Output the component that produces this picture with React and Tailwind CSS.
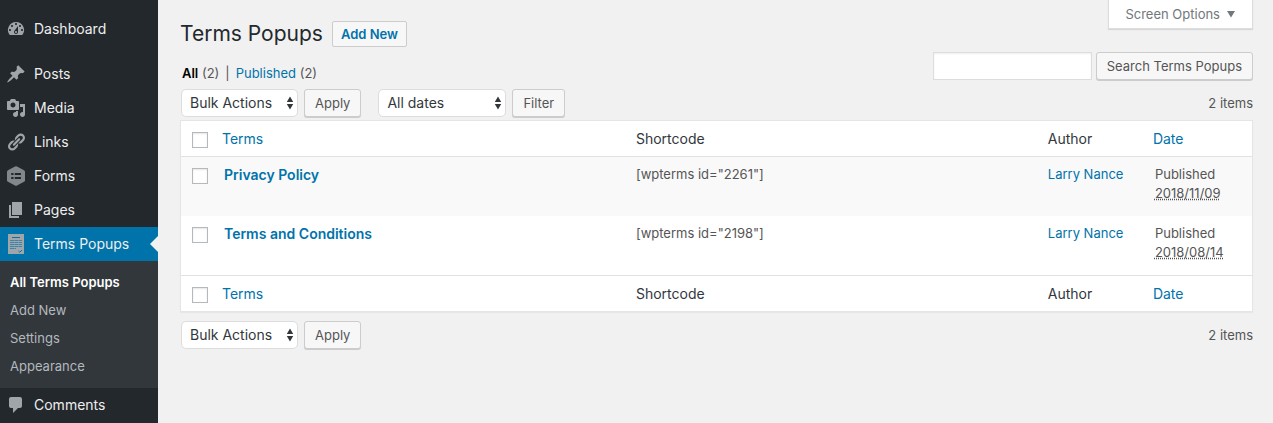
import React, { useState } from "react";

const ICONS = {
  dashboard:
    "M3.76 16h12.48A7.998 7.998 0 0 0 10 3a7.998 7.998 0 0 0-6.24 13zM10 4c.55 0 1 .45 1 1s-.45 1-1 1-1-.45-1-1 .45-1 1-1zM6 6c.55 0 1 .45 1 1s-.45 1-1 1-1-.45-1-1 .45-1 1-1zm8 0c.55 0 1 .45 1 1s-.45 1-1 1-1-.45-1-1 .45-1 1-1zm-5.37 5.55L12 7v6c0 1.1-.9 2-2 2s-2-.9-2-2c0-.57.24-1.08.63-1.45zM4 10c.55 0 1 .45 1 1s-.45 1-1 1-1-.45-1-1 .45-1 1-1zm12 0c.55 0 1 .45 1 1s-.45 1-1 1-1-.45-1-1 .45-1 1-1zm-5 3c0-.55-.45-1-1-1s-1 .45-1 1 .45 1 1 1 1-.45 1-1z",
  posts:
    "M10.44 3.02l1.82-1.82 6.36 6.35-1.83 1.82c-1.05-.68-2.48-.57-3.41.36l-.75.75c-.92.93-1.04 2.35-.35 3.41l-1.83 1.82-2.41-2.41-2.8 2.79c-.42.42-3.38 2.71-3.8 2.29s1.86-3.39 2.28-3.81l2.79-2.79L4.1 9.36l1.83-1.82c1.05.69 2.48.57 3.4-.36l.75-.75c.93-.92 1.05-2.35.36-3.41z",
  media:
    "M13 11V4c0-.55-.45-1-1-1h-1.67L9 1H5L3.67 3H2c-.55 0-1 .45-1 1v7c0 .55.45 1 1 1h10c.55 0 1-.45 1-1zM7 4.5c1.38 0 2.5 1.12 2.5 2.5S8.38 9.5 7 9.5 4.5 8.38 4.5 7 5.62 4.5 7 4.5zM14 6h5v10.5c0 1.38-1.12 2.5-2.5 2.5S14 17.88 14 16.5s1.12-2.5 2.5-2.5c.17 0 .34.02.5.05V9h-3V6zm-4 8.05V13h2v3.5c0 1.38-1.12 2.5-2.5 2.5S7 17.88 7 16.5 8.12 14 9.5 14c.17 0 .34.02.5.05z",
  links:
    "M17.74 2.76c1.68 1.69 1.68 4.41 0 6.1l-1.53 1.52c-1.12 1.12-2.7 1.47-4.14 1.09l2.62-2.61.76-.77.76-.76c.84-.84.84-2.2 0-3.04-.84-.85-2.2-.85-3.04 0l-.77.76-3.38 3.38c-.37-1.44-.02-3.02 1.1-4.14l1.52-1.53c1.69-1.68 4.42-1.68 6.1 0zM8.59 13.43l5.34-5.34c.42-.42.42-1.1 0-1.52-.44-.43-1.13-.39-1.53 0l-5.33 5.34c-.42.42-.42 1.1 0 1.52.44.43 1.13.39 1.52 0zm-.76 2.29l4.14-4.15c.38 1.44.03 3.02-1.09 4.14l-1.52 1.53c-1.69 1.68-4.41 1.68-6.1 0-1.68-1.68-1.68-4.42 0-6.1l1.53-1.52c1.12-1.12 2.7-1.47 4.14-1.1l-4.14 4.15c-.85.84-.85 2.2 0 3.05.84.84 2.2.84 3.04 0z",
  pages: "M6 15V2h10v13H6zm-1 1h8v2H3V5h2v11z",
  comments:
    "M5 2h9c1.1 0 2 .9 2 2v7c0 1.1-.9 2-2 2h-2l-5 5v-5H5c-1.1 0-2-.9-2-2V4c0-1.1.9-2 2-2z",
};

const FormsIcon = () => (
  <svg viewBox="0 0 20 20" className="w-5 h-5" aria-hidden="true">
    <path
      d="M11 .5l7 3.700q1 .6 1 1.600v8.400q0 1-1 1.600l-7 3.700q-1 .5-2 0l-7-3.700q-1-.6-1-1.600V5.800q0-1 1-1.600L9 .5q1-.5 2 0z"
      fill="#82878c"
    />
    <path
      d="M5.200 7h2.300v2H5.200zM8.700 7h6.300v2H8.700zM5.200 11h2.300v2H5.200zM8.700 11h6.300v2H8.700z"
      fill="#23282d"
    />
  </svg>
);

const TermsIcon = () => (
  <svg viewBox="0 0 20 20" className="w-5 h-5" aria-hidden="true">
    <path d="M2 0h16v20H2z" fill="#a0a5aa" />
    <path d="M6 3.500h8" stroke="#0073aa" />
    <path
      d="M4 6.500h12M4 8.500h12M4 10.500h12M4 12.500h12M4 14.500h6"
      stroke="#0073aa"
      strokeWidth="0.8"
      strokeDasharray="4 0.4"
      opacity="0.8"
    />
    <path d="M12.500 17l1.300 1.200L16 16" stroke="#0073aa" fill="none" />
  </svg>
);

const MenuIcon = ({ name }) => {
  if (name === "forms") return <FormsIcon />;
  if (name === "terms") return <TermsIcon />;
  return (
    <svg viewBox="0 0 20 20" className="w-5 h-5" fill="#a0a5aa" aria-hidden="true">
      <path d={ICONS[name]} />
    </svg>
  );
};

const menu = [
  { icon: "posts", label: "Posts" },
  { icon: "media", label: "Media" },
  { icon: "links", label: "Links" },
  { icon: "forms", label: "Forms" },
  { icon: "pages", label: "Pages" },
];

const submenu = ["Add New", "Settings", "Appearance"];

const posts = [
  { id: 2261, title: "Privacy Policy", author: "Larry Nance", date: "2018/11/09" },
  { id: 2198, title: "Terms and Conditions", author: "Larry Nance", date: "2018/08/14" },
];

const MenuItem = ({ icon, label }) => (
  <a
    href="#"
    className="flex items-center gap-2 h-[34px] pl-[6px] text-sm text-[#eeeeee] hover:text-[#00b9eb]"
  >
    <MenuIcon name={icon} />
    {label}
  </a>
);

const Sidebar = () => (
  <nav className="w-[158px] shrink-0 bg-[#23282d] pt-3">
    <MenuItem icon="dashboard" label="Dashboard" />
    <div className="mt-[11px]">
      {menu.map((item) => (
        <MenuItem key={item.label} {...item} />
      ))}
    </div>
    <div className="relative bg-[#0073aa]">
      <MenuItem icon="terms" label="Terms Popups" />
      <span className="absolute right-0 top-[9px] border-y-8 border-r-8 border-y-transparent border-r-[#f1f1f1]" />
    </div>
    <ul className="bg-[#32373c] pt-[7px] pb-2 text-[13px] leading-7">
      <li>
        <a href="#" className="block pl-[10px] font-semibold text-white">
          All Terms Popups
        </a>
      </li>
      {submenu.map((label) => (
        <li key={label}>
          <a href="#" className="block pl-[10px] text-[#b4b9be] hover:text-[#00b9eb]">
            {label}
          </a>
        </li>
      ))}
    </ul>
    <MenuItem icon="comments" label="Comments" />
  </nav>
);

const Button = ({ children, type = "button" }) => (
  <button
    type={type}
    className="h-7 px-[10px] pt-[2px] rounded-[3px] border border-[#cccccc] bg-[#f7f7f7] text-[13px] text-[#555555] whitespace-nowrap shadow-[0_1px_0_#cccccc]"
  >
    {children}
  </button>
);

const Select = ({ label, options, className }) => (
  <div className={`relative ${className}`}>
    <select
      aria-label={label}
      className="appearance-none block w-full h-7 pl-2 rounded-[5px] border border-[#dddddd] bg-white text-sm text-[#32373c]"
    >
      {options.map((option) => (
        <option key={option}>{option}</option>
      ))}
    </select>
    <svg
      viewBox="0 0 8 14"
      className="absolute right-1 top-[7px] w-2 h-[14px] pointer-events-none"
      fill="#32373c"
      aria-hidden="true"
    >
      <path d="M4 0.500L7.200 6H0.800zM4 13.500L0.800 8h6.400z" />
    </svg>
  </div>
);

const BulkActions = () => (
  <>
    <Select
      label="Select bulk action"
      options={["Bulk Actions", "Edit", "Move to Trash"]}
      className="w-[117px]"
    />
    <Button>Apply</Button>
  </>
);

const Checkbox = (props) => (
  <input
    type="checkbox"
    className="appearance-none block w-4 h-4 ml-[11px] border border-[#b4b9be] bg-white checked:bg-[#1e8cbe] shadow-[inset_0_1px_2px_rgba(0,0,0,0.1)]"
    {...props}
  />
);

const HeadRow = ({ checked, onToggle }) => (
  <tr className="text-left text-sm text-[#32373c]">
    <td className="pt-[3px]">
      <Checkbox aria-label="Select All" checked={checked} onChange={onToggle} />
    </td>
    <th className="px-2 pt-[2px] font-normal">
      <a href="#" className="text-[#0073aa]">Terms</a>
    </th>
    <th className="px-[10px] pt-[2px] font-normal">Shortcode</th>
    <th className="px-[10px] pt-[2px] font-normal">Author</th>
    <th className="px-2 pt-[2px] font-normal">
      <a href="#" className="text-[#0073aa]">Date</a>
    </th>
  </tr>
);

const App = () => {
  const [selected, setSelected] = useState([]);
  const allSelected = selected.length === posts.length;

  const toggleAll = () => setSelected(allSelected ? [] : posts.map(({ id }) => id));

  const toggle = (id) =>
    setSelected(
      selected.includes(id) ? selected.filter((item) => item !== id) : [...selected, id]
    );

  return (
    <div className="flex min-h-screen bg-[#f1f1f1] font-['Inter',sans-serif] text-[13px] text-[#555555]">
      <Sidebar />
      <main className="grow pl-[22px] pr-5">
        <header className="flex justify-between">
          <div className="pt-[21px]">
            <div className="flex items-center gap-[9px]">
              <h1 className="text-[21px] leading-[26px] text-[#23282d]">Terms Popups</h1>
              <a
                href="#"
                className="px-2 rounded-[2px] border border-[#cccccc] bg-[#f7f7f7] leading-6 font-semibold text-[#0073aa]"
              >
                Add New
              </a>
            </div>
            <ul className="flex gap-[6px] mt-4 pl-[2px] leading-5">
              <li>
                <a href="#" className="font-semibold text-black">All</a> (2)
              </li>
              <li>|</li>
              <li>
                <a href="#" className="text-[#0073aa]">Published</a> (2)
              </li>
            </ul>
          </div>
          <div className="flex flex-col items-end">
            <button
              type="button"
              className="flex items-center gap-[6px] h-[29px] px-4 pt-[2px] border border-t-0 border-[#dddddd] bg-white text-[#72777c] shadow-[0_1px_1px_rgba(0,0,0,0.1)]"
            >
              Screen Options
              <svg viewBox="0 0 10 8" className="w-[10px] h-2" fill="#72777c" aria-hidden="true">
                <path d="M1 0h8L5 6.500z" />
              </svg>
            </button>
            <form className="flex gap-1 mt-[23px]" onSubmit={(e) => e.preventDefault()}>
              <input
                type="search"
                aria-label="Search Terms Popups"
                className="w-[159px] h-7 px-1 border border-[#dddddd] bg-white shadow-[inset_0_1px_2px_rgba(0,0,0,0.07)]"
              />
              <Button type="submit">Search Terms Popups</Button>
            </form>
          </div>
        </header>

        <div className="flex items-center mt-[6px] pl-px">
          <div className="flex gap-[6px]">
            <BulkActions />
          </div>
          <div className="flex gap-[6px] ml-[17px]">
            <Select
              label="Filter by date"
              options={["All dates", "November 2018", "August 2018"]}
              className="w-32"
            />
            <Button>Filter</Button>
          </div>
          <span className="ml-auto pt-[2px]">2 items</span>
        </div>

        <div className="mt-[3px] border border-[#e5e5e5] bg-white shadow-[0_1px_1px_rgba(0,0,0,0.04)]">
          <table className="w-full table-fixed">
            <colgroup>
              <col className="w-[33px]" />
              <col />
              <col />
              <col className="w-[10%]" />
              <col className="w-[10%]" />
            </colgroup>
            <thead className="border-b border-[#e1e1e1] [&>tr]:h-[35px]">
              <HeadRow checked={allSelected} onToggle={toggleAll} />
            </thead>
            <tbody>
              {posts.map(({ id, title, author, date }) => (
                <tr key={id} className="align-top leading-[19px] odd:bg-[#f9f9f9]">
                  <td className="pt-[11px]">
                    <Checkbox
                      aria-label={`Select ${title}`}
                      checked={selected.includes(id)}
                      onChange={() => toggle(id)}
                    />
                  </td>
                  <td className="px-[10px] pt-2">
                    <a href="#" className="text-sm leading-[19px] font-semibold text-[#0073aa]">
                      {title}
                    </a>
                  </td>
                  <td className="px-[10px] pt-2">[wpterms id="{id}"]</td>
                  <td className="px-[10px] pt-2">
                    <a href="#" className="text-[#0073aa]">{author}</a>
                  </td>
                  <td className="px-[10px] pt-2 pb-[13px]">
                    Published
                    <br />
                    <abbr title={date} className="underline decoration-dotted">
                      {date}
                    </abbr>
                  </td>
                </tr>
              ))}
            </tbody>
            <tfoot className="border-t border-[#e1e1e1] [&>tr]:h-9">
              <HeadRow checked={allSelected} onToggle={toggleAll} />
            </tfoot>
          </table>
        </div>

        <div className="flex items-center gap-[6px] mt-[9px] pl-px">
          <BulkActions />
          <span className="ml-auto pt-[2px]">2 items</span>
        </div>
      </main>
    </div>
  );
};

export default App;
